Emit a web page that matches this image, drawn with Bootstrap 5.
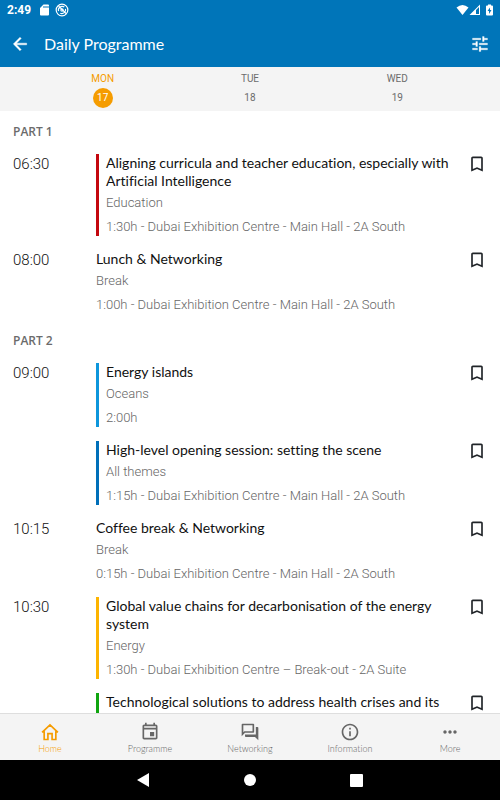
<!DOCTYPE html>
<html lang="en">
<head>
<meta charset="utf-8">
<meta name="viewport" content="width=device-width, initial-scale=1">
<title>Daily Programme</title>
<link href="https://cdn.jsdelivr.net/npm/bootstrap@5.3.0/dist/css/bootstrap.min.css" rel="stylesheet">
<style>
  body { font-family: Roboto, "Liberation Sans", sans-serif; color: #111; background: #fff; font-variant-ligatures: none; }
  svg { display: block; fill: currentColor; flex: none; }
  button { color: inherit; }
  .brand-bar { background: #0075b9; }
  .status-row { height: 20px; font-size: 12px; line-height: 20px; padding: 0 6px 0 7px; }
  .title-row { height: 47px; padding: 0 10px; gap: 14px; }
  .title-row h1 { font-family: Lato, sans-serif; font-size: 16px; line-height: 24px; }
  .days { background: #f4f4f4; height: 44px; padding: 0 29px; font-size: 10px; color: #6c6c6c; }
  .day { line-height: 12px; gap: 3px; padding-top: 6px; color: inherit; }
  .day-number { width: 20px; height: 20px; line-height: 20px; }
  .day.current { color: #f59c00; }
  .day.current .day-number { background: #f59c00; color: #fff; }
  .programme { min-height: 0; padding-top: 8px; scrollbar-width: none; }
  .programme::-webkit-scrollbar { display: none; }
  .part-title { font-family: "Open Sans", sans-serif; font-size: 12px; font-weight: 600; line-height: 18px; padding: 4px 13px 13px; color: #6b6b6b; }
  .slot { padding: 0 13px; margin-bottom: 14px; }
  .slot-time { width: 83px; font-size: 15px; font-weight: 300; line-height: 20px; flex: none; }
  .slot-body { min-height: 64px; }
  .themed { border-left: 3px solid; padding-left: 7px; }
  .education { border-color: #c4070f; }
  .oceans { border-color: #0d96dc; }
  .all-themes { border-color: #006fb9; }
  .energy { border-color: #fdb400; }
  .health { border-color: #10a510; }
  .slot-title { font-family: Lato, sans-serif; font-size: 14px; line-height: 18px; color: #111; }
  .slot-theme, .slot-place { font-size: 13px; font-weight: 300; line-height: 18px; color: #666; }
  .slot-theme { margin: 4px 0 6px; }
  .save { width: 20px; margin: 0 0 0 8px; }
  .tabs { background: #f4f4f4; border-top: 1px solid #dedede; height: 47px; }
  .tab-link { color: #666; font-family: Lato, sans-serif; font-size: 9px; font-weight: 300; line-height: 12px; gap: 1px; padding-top: 8px; }
  .tab-link.current { color: #f59c00; }
  .system-bar { height: 40px; gap: 84px; }
</style>
<script src="https://cdn.jsdelivr.net/npm/bootstrap@5.3.0/dist/js/bootstrap.bundle.min.js"></script>
</head>
<body class="vh-100 d-flex flex-column overflow-hidden">
<svg class="d-none" aria-hidden="true">
  <symbol id="bookmark" viewBox="0 0 24 24"><path d="M17 3H7c-1.100 0-2 .9-2 2v16l7-3 7 3V5c0-1.100-.9-2-2-2zm0 15-5-2.180L7 18V5h10v13z"/></symbol>
</svg>

<header class="brand-bar text-white flex-shrink-0">
  <div class="status-row d-flex align-items-center justify-content-between">
    <div class="d-flex align-items-center">
      <span class="fw-bold me-1">2:49</span>
      <svg class="ms-1" width="12" height="12" viewBox="0 0 24 24"><path d="M18 1H9L2 8v13q0 2 2 2h14q2 0 2-2V3q0-2-2-2zM11 8H9V4h2zm4 0h-2V4h2zm4 0h-2V4h2z"/></svg>
      <svg class="ms-1" width="14" height="14" viewBox="0 0 24 24"><g fill="none" stroke="currentColor" stroke-width="2"><circle cx="12" cy="12" r="10"/><path d="M6 14a6.500 6.500 0 0 1 10-7M18 10a6.500 6.500 0 0 1-9 7.500M6 5l13 13"/><circle cx="12" cy="12" r="2"/></g></svg>
    </div>
    <div class="d-flex align-items-center">
      <svg width="13" height="12" viewBox="0 0 26 24"><path d="M1 7Q13-3 25 7L13 22z"/></svg>
      <svg width="12" height="12" viewBox="0 0 24 24"><path fill-rule="evenodd" d="M1 22 22 1v21zM14 12v8h6V6z"/></svg>
      <svg class="ms-1" width="9" height="12" viewBox="0 0 18 24"><path fill-rule="evenodd" d="M6 1h6v2h2q2 0 2 2v16q0 2-2 2H4q-2 0-2-2V5q0-2 2-2h2zm4 6-5 7h3v6l5-8h-3z"/></svg>
    </div>
  </div>
  <div class="title-row d-flex align-items-center">
    <button class="btn p-0 border-0 text-white" aria-label="Back"><svg width="20" height="20" viewBox="0 0 24 24"><path stroke="currentColor" stroke-width=".5" d="M20 11H7.830l5.590-5.590L12 4l-8 8 8 8 1.410-1.410L7.830 13H20v-2z"/></svg></button>
    <h1 class="m-0 fw-normal flex-grow-1">Daily Programme</h1>
    <button class="btn p-0 border-0 text-white" aria-label="Filter"><svg width="20" height="20" viewBox="0 0 24 24"><path stroke="currentColor" stroke-width=".3" d="M3 17v2h6v-2H3zM3 5v2h10V5H3zm10 16v-2h8v-2h-8v-2h-2v6h2zM7 9v2H3v2h4v2h2V9H7zm14 4v-2H11v2h10zm-6-4h2V7h4V5h-4V3h-2v6z"/></svg></button>
  </div>
</header>

<nav class="days d-flex text-center flex-shrink-0" aria-label="Days">
  <a href="#mon" class="day current col d-flex flex-column align-items-center text-decoration-none" aria-current="date"><span>MON</span><span class="day-number rounded-circle">17</span></a>
  <a href="#tue" class="day col d-flex flex-column align-items-center text-decoration-none"><span>TUE</span><span class="day-number">18</span></a>
  <a href="#wed" class="day col d-flex flex-column align-items-center text-decoration-none"><span>WED</span><span class="day-number">19</span></a>
</nav>

<main class="programme flex-grow-1 overflow-auto" id="mon">
  <section>
    <h2 class="part-title m-0">PART 1</h2>
    <article class="slot d-flex">
      <time class="slot-time">06:30</time>
      <div class="slot-body themed education flex-grow-1">
        <h3 class="slot-title m-0 fw-normal">Aligning curricula and teacher education, especially with Artificial Intelligence</h3>
        <p class="slot-theme">Education</p>
        <p class="slot-place m-0">1:30h - Dubai Exhibition Centre - Main Hall - 2A South</p>
      </div>
      <button class="save btn p-0 border-0 flex-shrink-0 align-self-start" aria-label="Bookmark"><svg width="20" height="20"><use href="#bookmark"/></svg></button>
    </article>
    <article class="slot d-flex">
      <time class="slot-time">08:00</time>
      <div class="slot-body flex-grow-1">
        <h3 class="slot-title m-0 fw-normal">Lunch &amp; Networking</h3>
        <p class="slot-theme">Break</p>
        <p class="slot-place m-0">1:00h - Dubai Exhibition Centre - Main Hall - 2A South</p>
      </div>
      <button class="save btn p-0 border-0 flex-shrink-0 align-self-start" aria-label="Bookmark"><svg width="20" height="20"><use href="#bookmark"/></svg></button>
    </article>
  </section>
  <section>
    <h2 class="part-title m-0">PART 2</h2>
    <article class="slot d-flex">
      <time class="slot-time">09:00</time>
      <div class="slot-body themed oceans flex-grow-1">
        <h3 class="slot-title m-0 fw-normal">Energy islands</h3>
        <p class="slot-theme">Oceans</p>
        <p class="slot-place m-0">2:00h</p>
      </div>
      <button class="save btn p-0 border-0 flex-shrink-0 align-self-start" aria-label="Bookmark"><svg width="20" height="20"><use href="#bookmark"/></svg></button>
    </article>
    <article class="slot d-flex">
      <div class="slot-time"></div>
      <div class="slot-body themed all-themes flex-grow-1">
        <h3 class="slot-title m-0 fw-normal">High-level opening session: setting the scene</h3>
        <p class="slot-theme">All themes</p>
        <p class="slot-place m-0">1:15h - Dubai Exhibition Centre - Main Hall - 2A South</p>
      </div>
      <button class="save btn p-0 border-0 flex-shrink-0 align-self-start" aria-label="Bookmark"><svg width="20" height="20"><use href="#bookmark"/></svg></button>
    </article>
    <article class="slot d-flex">
      <time class="slot-time">10:15</time>
      <div class="slot-body flex-grow-1">
        <h3 class="slot-title m-0 fw-normal">Coffee break &amp; Networking</h3>
        <p class="slot-theme">Break</p>
        <p class="slot-place m-0">0:15h - Dubai Exhibition Centre - Main Hall - 2A South</p>
      </div>
      <button class="save btn p-0 border-0 flex-shrink-0 align-self-start" aria-label="Bookmark"><svg width="20" height="20"><use href="#bookmark"/></svg></button>
    </article>
    <article class="slot d-flex">
      <time class="slot-time">10:30</time>
      <div class="slot-body themed energy flex-grow-1">
        <h3 class="slot-title m-0 fw-normal">Global value chains for decarbonisation of the energy system</h3>
        <p class="slot-theme">Energy</p>
        <p class="slot-place m-0">1:30h - Dubai Exhibition Centre – Break-out - 2A Suite</p>
      </div>
      <button class="save btn p-0 border-0 flex-shrink-0 align-self-start" aria-label="Bookmark"><svg width="20" height="20"><use href="#bookmark"/></svg></button>
    </article>
    <article class="slot d-flex">
      <div class="slot-time"></div>
      <div class="slot-body themed health flex-grow-1">
        <h3 class="slot-title m-0 fw-normal">Technological solutions to address health crises and its</h3>
      </div>
      <button class="save btn p-0 border-0 flex-shrink-0 align-self-start" aria-label="Bookmark"><svg width="20" height="20"><use href="#bookmark"/></svg></button>
    </article>
  </section>
</main>

<nav class="tabs d-flex flex-shrink-0" aria-label="Main">
  <a href="#home" class="tab-link current col d-flex flex-column align-items-center text-decoration-none" aria-current="page">
    <svg width="20" height="20" viewBox="0 0 24 24"><path fill="none" stroke="currentColor" stroke-width="2" d="M2.500 12.500 12 3.500l9.500 9M5 11v10h4.500v-7h5v7H19V11"/></svg>Home</a>
  <a href="#programme" class="tab-link col d-flex flex-column align-items-center text-decoration-none">
    <svg width="20" height="20" viewBox="0 0 24 24"><path fill-rule="evenodd" d="M17 12h-5v5h5v-5zM16 1v2H8V1H6v2H5c-1.110 0-1.990.9-1.990 2L3 19c0 1.100.89 2 2 2h14c1.100 0 2-.9 2-2V5c0-1.100-.9-2-2-2h-1V1h-2zm3 18H5V9h14v10zM5 5h14v2H5z"/></svg>Programme</a>
  <a href="#networking" class="tab-link col d-flex flex-column align-items-center text-decoration-none">
    <svg width="20" height="20" viewBox="0 0 24 24"><path d="M15 4v7H5.170L4 12.170V4h11m1-2H3c-.55 0-1 .45-1 1v14l4-4h10c.55 0 1-.45 1-1V3c0-.55-.45-1-1-1zm5 4h-2v9H6v2c0 .55.45 1 1 1h11l4 4V7c0-.55-.45-1-1-1z"/></svg>Networking</a>
  <a href="#information" class="tab-link col d-flex flex-column align-items-center text-decoration-none">
    <svg width="20" height="20" viewBox="0 0 24 24"><path d="M11 7h2v2h-2zm0 4h2v6h-2zm1-9C6.480 2 2 6.480 2 12s4.480 10 10 10 10-4.480 10-10S17.520 2 12 2zm0 18c-4.410 0-8-3.590-8-8s3.590-8 8-8 8 3.590 8 8-3.590 8-8 8z"/></svg>Information</a>
  <a href="#more" class="tab-link col d-flex flex-column align-items-center text-decoration-none">
    <svg width="20" height="20" viewBox="0 0 24 24"><path d="M6 10c-1.100 0-2 .9-2 2s.9 2 2 2 2-.9 2-2-.9-2-2-2zm12 0c-1.100 0-2 .9-2 2s.9 2 2 2 2-.9 2-2-.9-2-2-2zm-6 0c-1.100 0-2 .9-2 2s.9 2 2 2 2-.9 2-2-.9-2-2-2z"/></svg>More</a>
</nav>

<footer class="system-bar bg-black text-white d-flex flex-shrink-0 align-items-center justify-content-center">
  <button class="btn p-0 border-0 text-white" aria-label="System back"><svg width="22" height="16" viewBox="0 0 22 16"><path d="M16 1v14L4 8z"/></svg></button>
  <button class="btn p-0 border-0 text-white" aria-label="System home"><svg width="22" height="16" viewBox="0 0 22 16"><circle cx="11" cy="8" r="6"/></svg></button>
  <button class="btn p-0 border-0 text-white" aria-label="System overview"><svg width="22" height="16" viewBox="0 0 22 16"><rect x="5" y="2" width="13" height="13" rx="1"/></svg></button>
</footer>
</body>
</html>
